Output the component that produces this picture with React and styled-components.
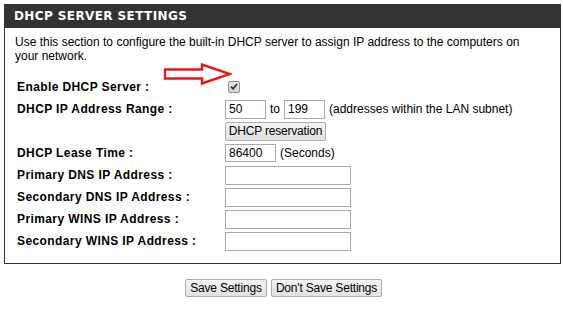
import styled, { createGlobalStyle } from "styled-components";

const GlobalStyle = createGlobalStyle`
  body {
    margin: 0;
    background: #ffffff;
    font-family: "Liberation Sans", Arial, sans-serif;
    font-size: 12px;
    color: #000000;
  }
`;

const PageWrapper = styled.div`
  padding: 4px 2px 0 4px;
  width: 557px;
`;

const Panel = styled.div`
  border: 1px solid #333333;
  border-top: none;
`;

const PanelHeader = styled.div`
  background: #333333;
  color: #ffffff;
  height: 24px;
  line-height: 24px;
  padding-left: 10px;
  font-family: "DejaVu Sans", Verdana, sans-serif;
  font-weight: bold;
  font-size: 12px;
  letter-spacing: 0.4px;
  margin: 0 -1px;
`;

const Description = styled.p`
  margin: 0;
  padding: 7px 20px 0 10px;
  line-height: 14px;
`;

const FormGrid = styled.div`
  position: relative;
  display: grid;
  grid-template-columns: 208px 1fr;
  grid-auto-rows: 22px;
  align-items: center;
  padding: 13px 0 11px 12px;
`;

const Label = styled.div`
  font-weight: bold;
  font-size: 12px;
  letter-spacing: 0.4px;
`;

const Field = styled.div`
  display: flex;
  align-items: center;
  gap: 4px;
`;

const TextInput = styled.input`
  box-sizing: border-box;
  width: ${(p) => p.$width}px;
  height: ${(p) => p.$height || 19}px;
  border: 1px solid #a9a9a9;
  padding: 0 3px;
  font-family: "Liberation Sans", Arial, sans-serif;
  font-size: 12px;
  color: #000;
  margin: 0;
  outline: none;
`;

const CheckBox = styled.span`
  box-sizing: border-box;
  width: 12px;
  height: 12px;
  margin: 0 0 1px 3px;
  border: 1px solid #8f8f8f;
  border-radius: 2px;
  background: linear-gradient(#e8e8e8, #d0d0d0);
  display: flex;
  align-items: center;
  justify-content: center;
`;

const Button = styled.button`
  box-sizing: border-box;
  width: ${(p) => p.$width}px;
  height: ${(p) => p.$height || 19}px;
  padding: 0;
  border: 1px solid #adadad;
  border-radius: 2px;
  background: linear-gradient(#f4f4f4, #e1e1e1);
  font-family: "Liberation Sans", Arial, sans-serif;
  font-size: 12px;
  letter-spacing: -0.2px;
  color: #000;
  white-space: nowrap;
  cursor: pointer;
`;

const Arrow = styled.svg`
  position: absolute;
  left: 147px;
  top: 0;
`;

const Footer = styled.div`
  display: flex;
  justify-content: center;
  gap: 4px;
  padding: 15px 0 0 2px;
`;

const CheckMark = () => (
  <svg width="8" height="7" viewBox="0 0 9 8">
    <path d="M1 4.2 L3.4 6.6 L8 1.2" stroke="#333" strokeWidth="2" fill="none" />
  </svg>
);

const App = () => {
  return (
    <PageWrapper>
      <GlobalStyle />
      <Panel>
        <PanelHeader>DHCP SERVER SETTINGS</PanelHeader>
        <Description>
          Use this section to configure the built-in DHCP server to assign IP
          address to the computers on your network.
        </Description>
        <FormGrid>
          <Arrow width="80" height="24" viewBox="0 0 80 24">
            <path
              d="M13 6.5 L50 6.5 L50 1.5 L78 11 L50 20.5 L50 15.5 L13 15.5 Z"
              stroke="#e8141b"
              strokeWidth="2.4"
              fill="none"
            />
          </Arrow>
          <Label>Enable DHCP Server :</Label>
          <Field>
            <CheckBox>
              <CheckMark />
            </CheckBox>
          </Field>

          <Label>DHCP IP Address Range :</Label>
          <Field>
            <TextInput $width={41} defaultValue="50" />
            <span>to</span>
            <TextInput $width={41} defaultValue="199" />
            <span>(addresses within the LAN subnet)</span>
          </Field>

          <span />
          <Field>
            <Button $width={101}>DHCP reservation</Button>
          </Field>

          <Label>DHCP Lease Time :</Label>
          <Field>
            <TextInput $width={51} $height={18} defaultValue="86400" />
            <span>(Seconds)</span>
          </Field>

          <Label>Primary DNS IP Address :</Label>
          <Field>
            <TextInput $width={126} />
          </Field>

          <Label>Secondary DNS IP Address :</Label>
          <Field>
            <TextInput $width={126} />
          </Field>

          <Label>Primary WINS IP Address :</Label>
          <Field>
            <TextInput $width={126} />
          </Field>

          <Label>Secondary WINS IP Address :</Label>
          <Field>
            <TextInput $width={126} />
          </Field>
        </FormGrid>
      </Panel>
      <Footer>
        <Button $width={82} $height={18}>Save Settings</Button>
        <Button $width={111} $height={18}>Don't Save Settings</Button>
      </Footer>
    </PageWrapper>
  );
};

export default App;
